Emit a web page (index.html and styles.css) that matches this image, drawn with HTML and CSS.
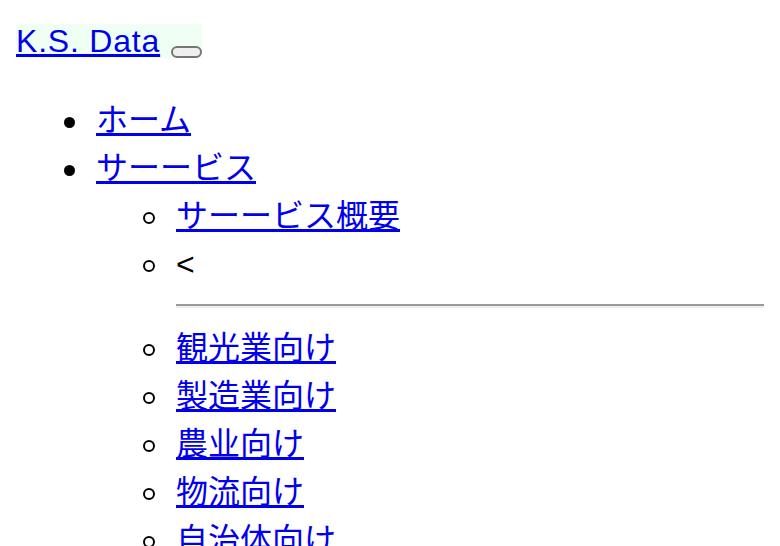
FILE: index.html
```html
<!DOCTYPE html>
<html lang="ja">
<head>
<meta charset="utf-8">
<title>K.S. Data</title>
<link rel="stylesheet" href="styles.css">
</head>
<body>
<header class="site-header">
  <a class="brand" href="#">K.S. Data</a>
  <button class="menu-toggle" type="button"></button>
</header>
<nav class="site-nav">
  <ul class="nav-list">
    <li><a href="#">ホーム</a></li>
    <li><a href="#">サーービス</a>
      <ul class="sub-list">
        <li><a href="#">サーービス概要</a></li>
        <li>&lt;</li>
        <li class="sep"><hr></li>
        <li><a href="#">観光業向け</a></li>
        <li><a href="#">製造業向け</a></li>
        <li><a href="#">農业向け</a></li>
        <li><a href="#">物流向け</a></li>
        <li><a href="#">自治体向け</a></li>
      </ul>
    </li>
  </ul>
</nav>
</body>
</html>
```

FILE: styles.css
```css
html, body {
  margin: 0;
  padding: 0;
  background: #ffffff;
}

body {
  padding: 24px 16px 0 16px;
  font-family: "Liberation Sans", "Noto Sans CJK JP", sans-serif;
  font-size: 32px;
  color: #000000;
}

a {
  color: #0000ee;
}

.site-header {
  display: flex;
  align-items: flex-end;
  width: fit-content;
  background: #effff4;
}

.brand {
  line-height: 34px;
  letter-spacing: 0.8px;
}

.menu-toggle {
  box-sizing: border-box;
  width: 31px;
  height: 12px;
  margin: 0 0 0 11px;
  padding: 0;
  border: 2px solid #767676;
  border-radius: 6px;
  background: #efefef;
}

.site-nav {
  margin-top: 38px;
}

.nav-list {
  margin: 0;
  padding-left: 80px;
  list-style: none;
  line-height: 48px;
}

.nav-list > li::before {
  content: "";
  display: inline-block;
  box-sizing: border-box;
  width: 11px;
  height: 11px;
  margin: 21px 21px 0 -32px;
  border-radius: 50%;
  background: #000000;
  vertical-align: top;
}

.sub-list {
  margin: 0;
  padding-left: 80px;
  list-style: none;
}

.sub-list > li::before {
  content: "";
  display: inline-block;
  box-sizing: border-box;
  width: 12px;
  height: 12px;
  margin: 20px 21px 0 -33px;
  border: 2px solid #000000;
  border-radius: 50%;
  background: transparent;
  vertical-align: top;
}

.sub-list > li.sep::before {
  content: none;
}

.sep hr {
  margin: 16px 0;
  border: 0;
  border-top: 2px solid #9a9a9a;
  border-bottom: 2px solid #eeeeee;
  height: 0;
}
```
